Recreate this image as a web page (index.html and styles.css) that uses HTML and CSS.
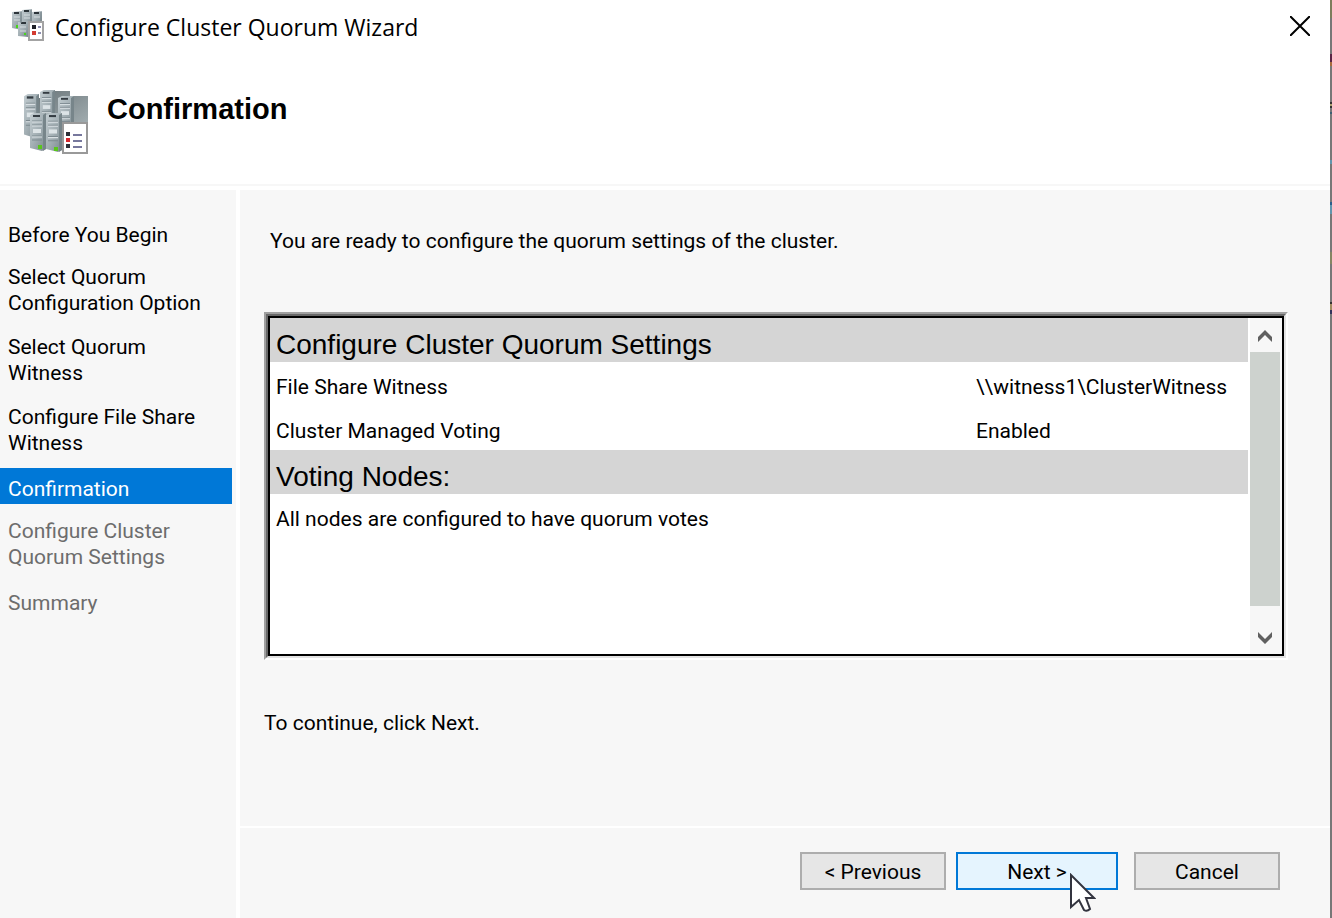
FILE: index.html
```html
<!DOCTYPE html>
<html lang="en">
<head>
  <meta charset="UTF-8">
  <meta name="viewport" content="width=device-width, initial-scale=1.0">
  <title>Configure Cluster Quorum Wizard</title>

  <link rel="stylesheet" href="styles.css">
</head>
<body>
  <!-- gradients and server tower shared by both icons -->
  <svg class="defs" width="0" height="0" aria-hidden="true">
    <defs>
      <linearGradient id="metal" x1="0" y1="0" x2="1" y2="1">
        <stop offset="0" stop-color="#c3cdd1"/>
        <stop offset="0.5" stop-color="#a3afb4"/>
        <stop offset="1" stop-color="#7a888d"/>
      </linearGradient>
      <linearGradient id="side" x1="0" y1="0" x2="1" y2="1">
        <stop offset="0" stop-color="#6c777b"/>
        <stop offset="1" stop-color="#a2adb0"/>
      </linearGradient>
      <symbol id="tower" viewBox="0 0 16 38" preserveAspectRatio="none">
        <path d="M0 2L4 0H16V36L12 38L0 35Z" fill="url(#metal)"/>
        <path d="M13 2L16 0V36L13 38Z" fill="#77858a"/>
        <path d="M3 2H10V4H3Z" fill="#343c42"/>
        <path d="M2 8H12M2 12H12M2 23H12M2 27H12" stroke="#7d8a90" stroke-width="1"/>
        <path d="M2 9H12M2 13H12M2 24H12" stroke="#d9e0e3" stroke-width="1"/>
        <path d="M3 16H11V20H3Z" fill="#dce3e6"/>
      </symbol>
    </defs>
  </svg>

  <main class="wizard">
    <div class="titlebar">
      <svg class="title-icon" viewBox="0 0 32 32" aria-hidden="true">
        <path d="M0 2L10 1V20L0 18Z" fill="url(#metal)"/>
        <path d="M10 0L20 -1V17H10Z" fill="url(#metal)"/>
        <path d="M20 2L30 1V15H20Z" fill="url(#metal)"/>
        <path d="M6 12L16 11V27L6 26Z" fill="url(#metal)"/>
        <path d="M2 2H7V4H2ZM12 0H17V2H12ZM22 2H27V4H22ZM9 12H14V14H9Z" fill="#2c3439"/>
        <path d="M2 7H8M2 10H8M12 5H18M12 8H18M22 7H28M8 17H14M8 21H14" stroke="#d5dcdf" stroke-width="1"/>
        <path d="M9 2V13M19 0V11M29 2V11" stroke="#728086" stroke-width="1"/>
        <path d="M4 15H6V18H4ZM12 23H14V25H12Z" fill="#48d61b"/>
        <path d="M17 12H31V30H17Z" fill="#fff" stroke="#a3a3a3" stroke-width="2"/>
        <path d="M20 15H24V19H20Z" fill="#1e2027"/>
        <path d="M20 21H24V25H20Z" fill="#d33b31"/>
        <path d="M26 17H29M26 23H29" stroke="#8d8eb0" stroke-width="2"/>
      </svg>
      <span class="title">Configure Cluster Quorum Wizard</span>
      <button type="button" class="close" aria-label="Close">
        <svg width="20" height="20" viewBox="0 0 20 20"><path d="M0 0L20 20M20 0L0 20" stroke="#000" stroke-width="2"/></svg>
      </button>
    </div>

    <header class="banner">
      <svg class="banner-icon" viewBox="0 0 64 64" aria-hidden="true">
        <path d="M30 1H46V10H30ZM50 6H64V34H50ZM15 8H50V30H15Z" fill="url(#side)"/>
        <use href="#tower" x="0" y="4" width="15" height="44"/>
        <use href="#tower" x="16" y="0" width="15" height="36"/>
        <use href="#tower" x="34" y="6" width="16" height="36"/>
        <use href="#tower" x="6" y="23" width="16" height="38"/>
        <use href="#tower" x="22" y="23" width="16" height="39"/>
        <path d="M14 55H18V59H14ZM30 57H34V61H30Z" fill="#59c71b"/>
        <path d="M39 33H63V63H39Z" fill="#fff" stroke="#999" stroke-width="2"/>
        <path d="M42 42H46V46H42ZM42 54H46V58H42Z" fill="#2e3038"/>
        <path d="M42 48H46V52H42Z" fill="#d5252b"/>
        <path d="M49 45H58M49 51H58M49 57H58" stroke="#77789d" stroke-width="2"/>
      </svg>
      <h1>Confirmation</h1>
    </header>

    <div class="body">
      <nav class="steps">
        <ol>
          <li class="single">Before You Begin</li>
          <li>Select Quorum<br>Configuration Option</li>
          <li>Select Quorum<br>Witness</li>
          <li>Configure File Share<br>Witness</li>
          <li class="single current">Confirmation</li>
          <li class="pending">Configure Cluster<br>Quorum Settings</li>
          <li class="single pending">Summary</li>
        </ol>
      </nav>

      <section class="page">
        <div class="content">
          <p class="intro">You are ready to configure the quorum settings of the cluster.</p>

          <div class="frame">
            <div class="report">
              <table>
                <tr class="group"><th colspan="2">Configure Cluster Quorum Settings</th></tr>
                <tr><td>File Share Witness</td><td class="value">\\witness1\ClusterWitness</td></tr>
                <tr><td>Cluster Managed Voting</td><td class="value">Enabled</td></tr>
                <tr class="group"><th colspan="2">Voting Nodes:</th></tr>
                <tr><td colspan="2">All nodes are configured to have quorum votes</td></tr>
              </table>
              <div class="scrollbar">
                <button type="button" aria-label="Scroll up">
                  <svg width="14" height="12" viewBox="0 0 14 12"><path d="M0 7L7 0L14 7V12L7 5L0 12Z" fill="#606060"/></svg>
                </button>
                <div class="thumb"></div>
                <button type="button" aria-label="Scroll down">
                  <svg width="14" height="12" viewBox="0 0 14 12"><path d="M0 0L7 7L14 0V5L7 12L0 5Z" fill="#606060"/></svg>
                </button>
              </div>
            </div>
          </div>

          <p class="hint">To continue, click Next.</p>
        </div>

        <footer class="actions">
          <button type="button" class="btn">&lt; Previous</button>
          <div class="next">
            <button type="button" class="btn primary">Next &gt;</button>
            <svg class="cursor" width="26" height="40" viewBox="0 0 26 40" aria-hidden="true">
              <path d="M1 2V34L9 27L14 37Q17 39 20 36L16 25H24Z" fill="#fff" stroke="#33343f" stroke-width="2"/>
            </svg>
          </div>
          <button type="button" class="btn">Cancel</button>
        </footer>
      </section>
    </div>
  </main>
</body>
</html>
```
FILE: styles.css
```css
* {
  box-sizing: border-box;
}

body {
  margin: 0;
  padding-right: 2px;
  font-family: Roboto, "Liberation Sans", sans-serif;
  font-size: 21px;
  line-height: 26px;
  color: #000;
  /* sliver of the desktop showing beside the window */
  background: linear-gradient(#7d7d5c 0 18px, #777 18px 54px, #5a2546 54px 62px, #a86a3c 62px 66px, #777 66px 102px, #333 102px 104px, #aaa070 104px 106px, #333 106px 108px, #777 108px 112px, #3c5f73 112px 114px, #777 114px 160px, #6295ad 160px 164px, #777 164px 202px, #2b5f8c 202px 205px, #6295ad 205px 214px, #777 214px 252px, #858563 252px 264px, #777 264px 302px, #333 302px 304px, #a08a60 304px 310px, #33345c 310px 314px, #777 314px) right top / 2px 100% no-repeat;
}

button {
  font: inherit;
  color: inherit;
  margin: 0;
  padding: 0;
  border: 0;
  background: none;
}

svg {
  display: block;
}

h1, p, ol {
  margin: 0;
  padding: 0;
}

.defs {
  position: absolute;
}

.wizard {
  display: flex;
  flex-direction: column;
  min-height: 100vh;
  background: #fff;
}

.titlebar {
  display: flex;
  align-items: center;
  height: 54px;
  padding: 0 20px 2px 12px;
}

.title-icon {
  width: 32px;
  height: 32px;
  margin-right: 11px;
  overflow: visible;
}

.title {
  flex: 1;
  padding-top: 2px;
  font-family: "Open Sans", "Noto Sans", sans-serif;
  font-size: 23px;
}

.banner {
  display: flex;
  height: 132px;
  padding: 36px 24px 0;
  gap: 19px;
  border-bottom: 2px solid #f7f7f7;
}

.banner-icon {
  width: 64px;
  height: 64px;
}

h1 {
  font-family: "Liberation Sans", Arial, sans-serif;
  font-size: 29px;
  line-height: 38px;
}

.body {
  display: flex;
  flex: 1;
  gap: 4px;
  margin-top: 4px;
}

.steps {
  width: 236px;
  padding: 24px 4px 24px 0;
  background: #f7f7f7;
}

.steps ol {
  display: grid;
  gap: 8px;
  list-style: none;
}

.steps li {
  padding: 6px 8px 4px;
  white-space: nowrap;
}

.steps .single {
  padding: 8px 8px 2px;
}

.steps .current {
  background: #0078d7;
  color: #fff;
}

.steps .pending {
  color: #6d6d6d;
}

.page {
  display: flex;
  flex: 1;
  flex-direction: column;
  background: #f7f7f7;
}

.content {
  flex: 1;
  padding: 38px 42px 24px 24px;
}

.intro {
  padding-left: 6px;
}

.frame {
  margin: 58px 0 50px;
  border: 2px solid;
  border-color: #a0a0a0 #fff #fff #a0a0a0;
}

.report {
  display: flex;
  gap: 2px;
  height: 344px;
  border: 2px solid;
  border-color: #696969 #e3e3e3 #e3e3e3 #696969;
  outline: 2px solid #000;
  outline-offset: -4px;
  padding: 2px;
  background: #fff;
}

table {
  flex: 1;
  align-self: flex-start;
  border-collapse: collapse;
}

th, td {
  height: 44px;
  padding: 5px 6px 0;
  text-align: left;
}

.value {
  width: 278px;
}

.group {
  background: #d5d5d5;
}

th {
  padding-top: 10px;
  font-family: "Liberation Sans", Arial, sans-serif;
  font-size: 28px;
  font-weight: normal;
}

.scrollbar {
  display: flex;
  flex-direction: column;
  width: 32px;
  padding-right: 2px;
  background: #f7f7f7;
}

.scrollbar button {
  display: grid;
  place-items: center;
  height: 34px;
  padding-top: 2px;
}

.scrollbar button:last-child {
  height: 48px;
  padding-top: 16px;
}

.thumb {
  flex: 1;
  background: #cdd2ce;
}

.actions {
  display: flex;
  height: 92px;
  padding: 24px 50px 0 0;
  justify-content: flex-end;
  border-top: 2px solid #fff;
}

.btn {
  width: 146px;
  height: 38px;
  padding-top: 2px;
  border: 2px solid #adadad;
  background: #e6e6e6;
}

.next {
  position: relative;
  margin: 0 16px 0 10px;
}

.btn.primary {
  width: 162px;
  border-color: #0078d7;
  background: #e5f4fe;
}

.cursor {
  position: absolute;
  left: 114px;
  top: 21px;
}
```
